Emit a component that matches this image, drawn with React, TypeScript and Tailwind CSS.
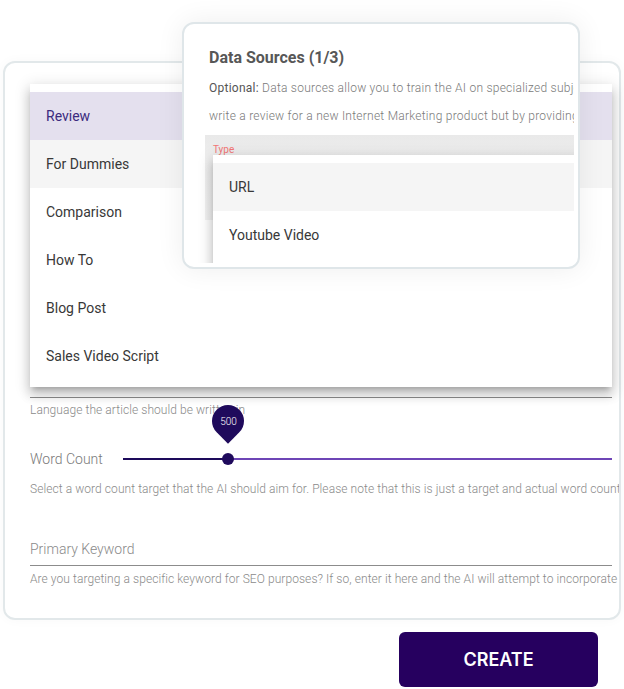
import { FC } from "react";

const articleTypes = [
  "Review",
  "For Dummies",
  "Comparison",
  "How To",
  "Blog Post",
  "Sales Video Script",
];

const ArticleTypeMenu: FC = () => {
  return (
    <div className="absolute left-[30px] top-[84px] w-[582px] h-[303px] bg-white py-[8px] shadow-[0_5px_5px_-3px_rgba(0,0,0,0.2),0_8px_10px_1px_rgba(0,0,0,0.14),0_3px_14px_2px_rgba(0,0,0,0.12)]">
      {articleTypes.map((t, i) =>
        i === 0 ? (
          <div
            key={t}
            className="h-[48px] flex items-center pl-[16px] text-[14px] text-[#3b2b7e] bg-[#e4e0ee]"
          >
            {t}
          </div>
        ) : i === 1 ? (
          <div
            key={t}
            className="h-[48px] flex items-center pl-[16px] text-[14px] text-[#383838] bg-[#f5f5f5]"
          >
            {t}
          </div>
        ) : (
          <div
            key={t}
            className="h-[48px] flex items-center pl-[16px] text-[14px] text-[#383838]"
          >
            {t}
          </div>
        )
      )}
    </div>
  );
};

const DataSourcesModal: FC = () => {
  return (
    <div className="absolute left-[182px] top-[22px] w-[398px] h-[247px] bg-white border-2 border-[#dfe6e9] rounded-[12px] shadow-[0_0_28px_rgba(0,0,0,0.07)]">
      <div className="h-[239px] mr-[4px] pl-[21px] pt-[24px] overflow-hidden">
        <div className="pl-[4px] text-[16px] leading-[20px] font-bold text-[#575757]">
          Data Sources (1/3)
        </div>
        <div className="pl-[4px] mt-[6px] text-[12px] leading-[28px] font-light tracking-[0.25px] text-[#7a7a7a] whitespace-nowrap">
          <div>
            <span className="font-normal text-[#555]">Optional:</span> Data
            sources allow you to train the AI on specialized subjects that it may
            not know about.
          </div>
          <div>
            write a review for a new Internet Marketing product but by providing
            a URL to the sales page
          </div>
        </div>
        <div className="relative mt-[5px] h-[85px] w-[420px] bg-[linear-gradient(#e9e9e9,#efefef_30%,#f3f3f3)]">
          <div className="pl-[8px] pt-[9px] text-[10px] leading-[12px] text-[#f37676]">
            Type
          </div>
          <div className="absolute left-[8px] top-[20px] w-[420px] bg-white pt-[8px] shadow-[0_5px_5px_-3px_rgba(0,0,0,0.2),0_8px_10px_1px_rgba(0,0,0,0.14),0_3px_14px_2px_rgba(0,0,0,0.12)]">
            <div className="h-[48px] flex items-center pl-[16px] text-[14px] text-[#383838] bg-[#f5f5f5]">
              URL
            </div>
            <div className="h-[48px] flex items-center pl-[16px] text-[14px] text-[#383838]">
              Youtube Video
            </div>
            <div className="h-[48px] flex items-center pl-[16px] text-[14px] text-[#383838]">
              Text
            </div>
          </div>
        </div>
      </div>
    </div>
  );
};

const WordCountSlider: FC = () => {
  return (
    <div className="flex items-center h-[20px]">
      <div className="w-[93px] shrink-0 text-[14px] text-[#7a7a7a] font-light">
        Word Count
      </div>
      <div className="relative flex-1 h-[2px] flex">
        <div className="w-[105px] h-[2px] bg-[#1d0a5b]" />
        <div className="flex-1 h-[2px] bg-[#6e45b6]" />
        <div className="absolute left-[99px] top-[-5px] w-[12px] h-[12px] rounded-full bg-[#1f0a5c]" />
        <div className="absolute left-[89px] top-[-53px] w-[32px] h-[32px] bg-[#1f0a5c] rounded-[50%_50%_50%_0] -rotate-45 flex items-center justify-center">
          <span className="rotate-45 text-[10px] font-light text-white">500</span>
        </div>
      </div>
    </div>
  );
};

const App: FC = () => {
  return (
    <div className="relative w-[624px] h-[689px] bg-white overflow-hidden font-['Roboto',sans-serif]">
      <div className="ml-[3px] mt-[61px] w-[618px] h-[559px] border-2 border-[#e2e8ea] rounded-[12px] bg-white shadow-[0_0_12px_rgba(0,0,0,0.03)]">
        <div className="pl-[25px] pr-[7px] overflow-hidden">
          <div className="h-[335px] border-b border-[#8c8c8c]">
            <div className="pt-[300px] text-[14px] text-[#555]">English</div>
          </div>
          <div className="mt-[4px] text-[12px] leading-[16px] font-light tracking-[0.07px] text-[#8a8a8a] whitespace-nowrap">
            Language the article should be written in
          </div>
          <div className="mt-[31px]">
            <WordCountSlider />
          </div>
          <div className="mt-[12px] text-[12px] leading-[16px] font-light tracking-[0.07px] text-[#8a8a8a] whitespace-nowrap">
            Select a word count target that the AI should aim for. Please note
            that this is just a target and actual word count may vary.
          </div>
          <div className="mt-[34px] h-[35px] border-b border-[#8c8c8c] pt-[8px]">
            <div className="text-[14px] leading-[20px] font-light text-[#8a8a8a]">
              Primary Keyword
            </div>
          </div>
          <div className="mt-[5px] text-[12px] leading-[16px] font-light tracking-[0.07px] text-[#8a8a8a] whitespace-nowrap">
            Are you targeting a specific keyword for SEO purposes? If so, enter
            it here and the AI will attempt to incorporate it.
          </div>
        </div>
      </div>
      <div className="flex justify-end pr-[26px] mt-[12px]">
        <button className="w-[199px] h-[55px] rounded-[6px] bg-[#26005f] text-white text-[18px] font-semibold font-['Inter',sans-serif]">
          CREATE
        </button>
      </div>
      <ArticleTypeMenu />
      <DataSourcesModal />
    </div>
  );
};

export default App;
